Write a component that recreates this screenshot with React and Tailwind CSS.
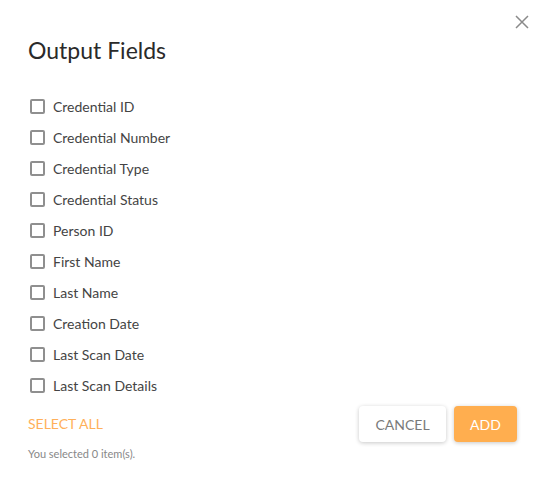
import React from 'react';

const fields = [
  'Credential ID',
  'Credential Number',
  'Credential Type',
  'Credential Status',
  'Person ID',
  'First Name',
  'Last Name',
  'Creation Date',
  'Last Scan Date',
  'Last Scan Details',
];

const CloseIcon = () => (
  <svg width="14" height="14" viewBox="0 0 14 14" fill="none" stroke="#8a8a8a" strokeWidth="1.5">
    <path d="M1 1L13 13M13 1L1 13" />
  </svg>
);

const App = () => {
  return (
    <div
      className="relative w-[546px] h-[477px] bg-white"
      style={{ fontFamily: 'Lato, "Open Sans", sans-serif' }}
    >
      <button className="absolute left-[515px] top-[15px] p-0">
        <CloseIcon />
      </button>

      <div className="pl-[28px] pr-[29px] pt-[37px]">
        <h2 className="text-[23px] leading-[27px] text-[#2a2a2a]">Output Fields</h2>

        <ul className="mt-[27px] pl-[2px]">
          {fields.map((f) => (
            <li key={f} className="flex items-center h-[31px] gap-[8px]">
              <span className="w-[15px] h-[15px] border-2 border-[#8f8f8f] rounded-[2px]" />
              <span className="text-[14px] text-[#444]">{f}</span>
            </li>
          ))}
        </ul>

        <div className="flex items-center justify-between mt-[5px]">
          <button className="text-[14px] text-[#ffb05a] uppercase -mt-[2px]">Select all</button>
          <div className="flex gap-[8px]">
            <button className="h-[36px] w-[87px] rounded-[4px] bg-white text-[14px] text-[#7a7a7a] shadow-[0_1px_4px_rgba(0,0,0,0.22)]">
              CANCEL
            </button>
            <button className="h-[36px] w-[63px] rounded-[4px] bg-[#ffae4f] text-[14px] text-white shadow-[0_1px_4px_rgba(0,0,0,0.22)]">
              ADD
            </button>
          </div>
        </div>

        <p className="mt-[4px] text-[11px] text-[#888]">You selected 0 item(s).</p>
      </div>
    </div>
  );
};

export default App;
